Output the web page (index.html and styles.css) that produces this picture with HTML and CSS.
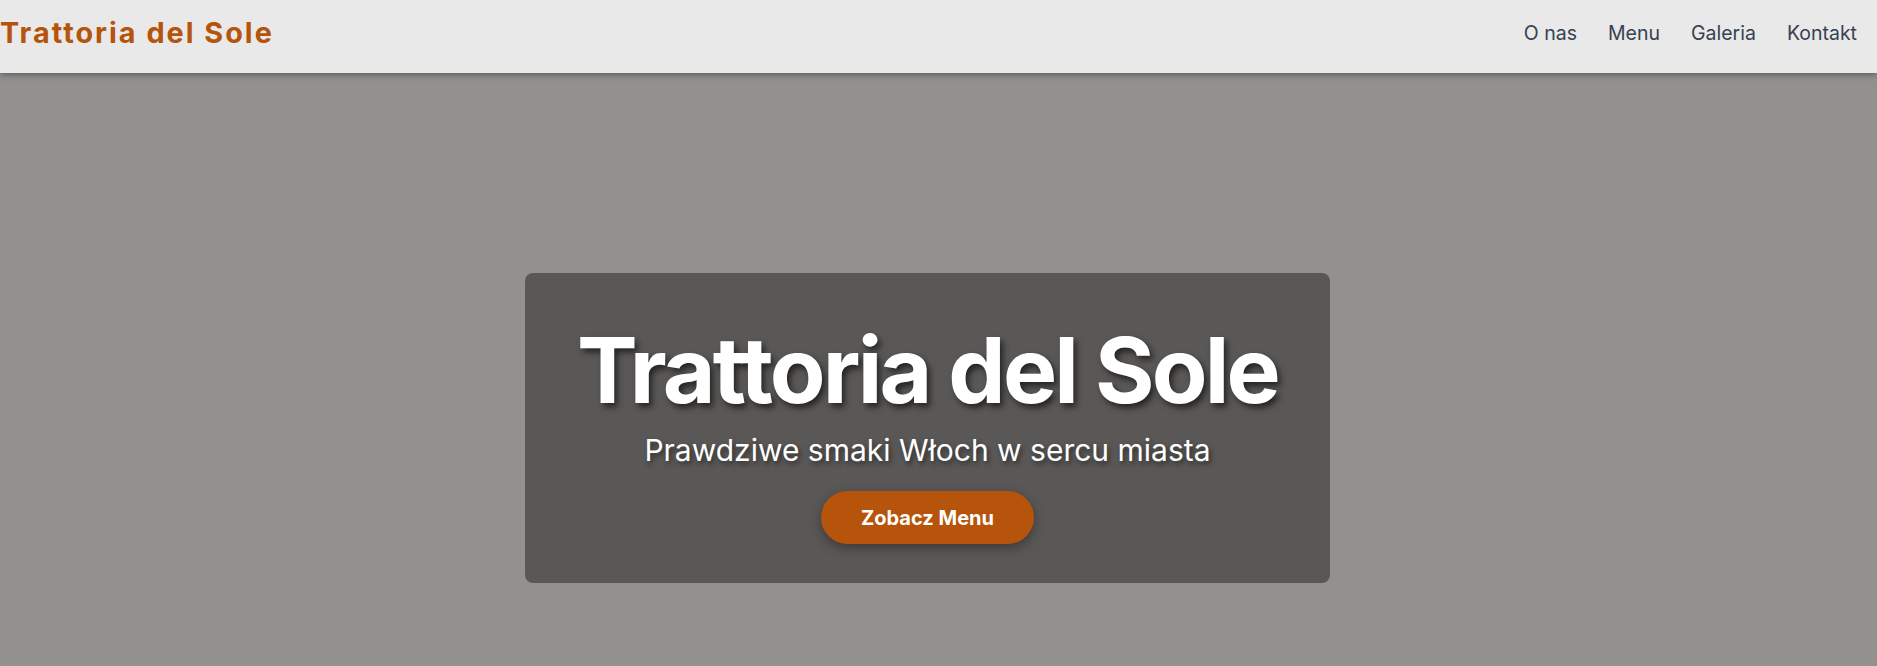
FILE: index.html
```html
<!DOCTYPE html>
<html lang="pl">
<head>
<meta charset="utf-8">
<title>Trattoria del Sole</title>
<link rel="stylesheet" href="styles.css">
</head>
<body>
<header class="site-header">
  <a class="logo" href="#">Trattoria del Sole</a>
  <nav class="nav">
    <a href="#">O nas</a>
    <a href="#">Menu</a>
    <a href="#">Galeria</a>
    <a href="#">Kontakt</a>
  </nav>
</header>
<main class="hero">
  <div class="hero-card">
    <h1 class="hero-title">Trattoria del Sole</h1>
    <p class="hero-sub">Prawdziwe smaki Włoch w sercu miasta</p>
    <a class="btn" href="#">Zobacz Menu</a>
  </div>
</main>
</body>
</html>
```
FILE: styles.css
```css
* { box-sizing: border-box; }
html, body { margin: 0; padding: 0; }
body {
  font-family: Inter, "Noto Sans", sans-serif;
  background: #92918e;
  height: 666px;
  overflow: hidden;
}
a { text-decoration: none; }
.site-header {
  position: relative;
  z-index: 2;
  height: 73px;
  background: #e9e9e9;
  display: flex;
  align-items: center;
  justify-content: space-between;
  padding: 0 20px 8px 0;
  box-shadow: 0 2px 6px rgba(0,0,0,0.35);
}
.logo {
  color: #b5540b;
  font-weight: 700;
  font-size: 28.8px;
  letter-spacing: 2px;
}
.nav {
  display: flex;
  gap: 31px;
}
.nav a {
  color: #374151;
  font-size: 19.5px;
}
.hero {
  display: flex;
  justify-content: center;
  padding: 200px 0 0 0;
}
.hero-card {
  width: 805px;
  height: 310px;
  margin-right: 22px;
  background: #5a5856;
  border-radius: 8px;
  display: flex;
  flex-direction: column;
  align-items: center;
  padding-top: 43px;
}
.hero-title {
  margin: 0;
  color: #fff;
  font-size: 91px;
  font-weight: 700;
  letter-spacing: -2.8px;
  line-height: 1.2;
  text-shadow: 3px 4px 6px rgba(0,0,0,0.6);
}
.hero-sub {
  margin: 6px 0 0 0;
  color: #fff;
  font-size: 30px;
  line-height: 1.3;
  text-shadow: 2px 3px 5px rgba(0,0,0,0.5);
}
.btn {
  margin-top: 21px;
  display: inline-flex;
  align-items: center;
  justify-content: center;
  width: 213px;
  height: 53px;
  border-radius: 27px;
  background: #b5540a;
  color: #fff;
  font-weight: 700;
  font-size: 20px;
  box-shadow: 0 4px 12px rgba(0,0,0,0.35);
}
```
